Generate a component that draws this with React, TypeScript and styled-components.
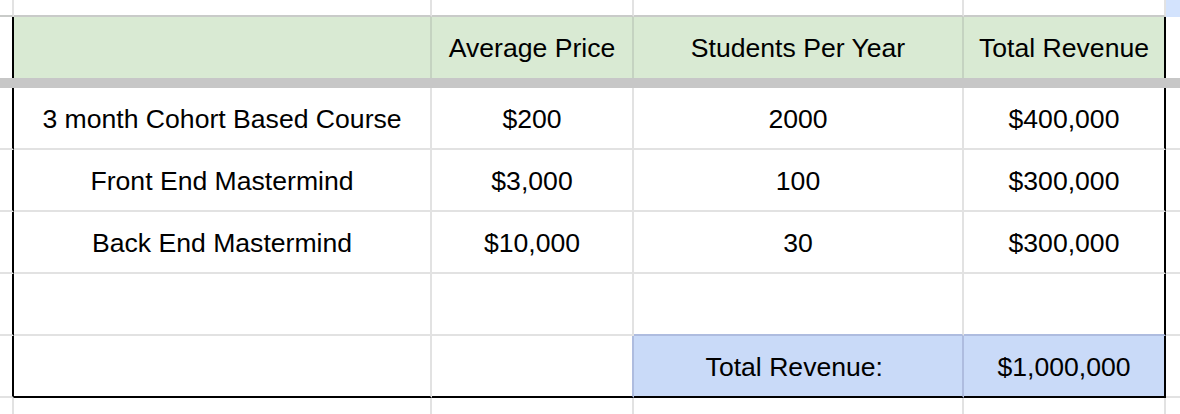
import React from "react";
import styled, { createGlobalStyle } from "styled-components";

const GlobalStyle = createGlobalStyle`
  html, body { margin: 0; padding: 0; background: #ffffff; }
  body { font-family: "Liberation Sans", Arial, Helvetica, sans-serif; }
`;

const GRID = "#e2e2e2";
const HEAD_LINE = "#c5d3c1";
const TOP_LINE = "#c9cbc9";
const BLACK = "#000000";
const GREEN = "#d9ead3";
const BLUE = "#c9daf8";
const BLUE_LINE = "#aebcdf";

const Sheet = styled.div`
  width: 1180px;
  height: 414px;
  overflow: hidden;
  display: flex;
  flex-direction: column;
  background: #ffffff;
`;

const Row = styled.div<{ $h: number }>`
  display: flex;
  flex: none;
  height: ${(p) => p.$h}px;
`;

const Cell = styled.div<{
  $w?: number;
  $bg?: string;
  $right?: string;
  $bottom?: string;
}>`
  box-sizing: border-box;
  ${(p) => (p.$w ? `width: ${p.$w}px; flex: none;` : `flex: 1;`)}
  height: 100%;
  padding-top: 2px;
  background: ${(p) => p.$bg ?? "#ffffff"};
  border-right: ${(p) => (p.$right ? `2px solid ${p.$right}` : "none")};
  border-bottom: ${(p) => (p.$bottom ? `2px solid ${p.$bottom}` : "none")};
  display: flex;
  align-items: center;
  justify-content: center;
  font-size: 26.6px;
  color: #000000;
  white-space: pre;
`;

const FrozenBar = styled.div`
  flex: none;
  height: 10px;
  background: #c7c7c7;
`;

const WIDTHS = [418, 202, 330, 202];

type Spec = { text?: string; bg?: string; right?: string; bottom?: string };

const headers = ["", "Average Price", "Students Per Year", "Total Revenue"];

const rows: string[][] = [
  ["3 month Cohort Based Course", "$200", "2000", "$400,000"],
  ["Front End Mastermind", "$3,000", "100", "$300,000"],
  ["Back End Mastermind", "$10,000", "30", "$300,000"],
];

function SheetRow({
  h,
  gutterRight,
  gutterBottom,
  cells,
  tailBg,
  tailBottom,
}: {
  h: number;
  gutterRight: string;
  gutterBottom?: string;
  cells: Spec[];
  tailBg?: string;
  tailBottom?: string;
}) {
  return (
    <Row $h={h}>
      <Cell $w={14} $right={gutterRight} $bottom={gutterBottom} />
      {cells.map((c, i) => (
        <Cell key={i} $w={WIDTHS[i]} $bg={c.bg} $right={c.right} $bottom={c.bottom}>
          {c.text}
        </Cell>
      ))}
      <Cell $bg={tailBg} $bottom={tailBottom} />
    </Row>
  );
}

export default function App() {
  const plain = (text: string, i: number): Spec => ({
    text,
    right: i === 3 ? BLACK : GRID,
    bottom: GRID,
  });

  return (
    <>
      <GlobalStyle />
      <Sheet>
        <SheetRow
          h={17}
          gutterRight={GRID}
          gutterBottom={TOP_LINE}
          cells={[0, 1, 2, 3].map(() => ({ right: GRID, bottom: TOP_LINE }))}
          tailBg="#d3e3fd"
          tailBottom="#d3e3fd"
        />
        <SheetRow
          h={61}
          gutterRight={BLACK}
          cells={headers.map((t, i) => ({
            text: t,
            bg: GREEN,
            right: i === 3 ? BLACK : HEAD_LINE,
          }))}
        />
        <FrozenBar />
        {rows.map((r, ri) => (
          <SheetRow
            key={ri}
            h={62}
            gutterRight={BLACK}
            gutterBottom={GRID}
            tailBottom={GRID}
            cells={r.map(plain)}
          />
        ))}
        <SheetRow
          h={62}
          gutterRight={BLACK}
          gutterBottom={GRID}
          tailBottom={GRID}
          cells={[
            { right: GRID, bottom: GRID },
            { right: GRID, bottom: GRID },
            { right: GRID, bottom: BLUE_LINE },
            { right: BLACK, bottom: BLUE_LINE },
          ]}
        />
        <SheetRow
          h={62}
          gutterRight={BLACK}
          gutterBottom={GRID}
          tailBottom={GRID}
          cells={[
            { right: GRID, bottom: BLACK },
            { right: BLUE_LINE, bottom: BLACK },
            { text: "Total Revenue: ", bg: BLUE, right: BLUE_LINE, bottom: BLACK },
            { text: "$1,000,000", bg: BLUE, right: BLACK, bottom: BLACK },
          ]}
        />
        <SheetRow
          h={16}
          gutterRight={GRID}
          cells={[0, 1, 2, 3].map(() => ({ right: GRID }))}
        />
      </Sheet>
    </>
  );
}
